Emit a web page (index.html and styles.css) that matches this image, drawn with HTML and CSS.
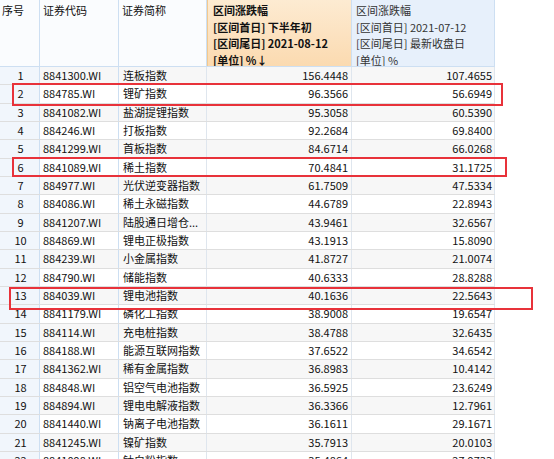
FILE: index.html
```html
<!DOCTYPE html>
<html lang="zh-CN">
<head>
<meta charset="utf-8">
<link rel="stylesheet" href="styles.css">
</head>
<body>
<div class="sheet">
  <div class="head">
    <div class="hc c1">序号</div>
    <div class="hc c2">证券代码</div>
    <div class="hc c3">证券简称</div>
    <div class="hc c4 active">区间涨跌幅<br>[区间首日] 下半年初<br>[区间尾日] 2021-08-12<br>[单位] %↓</div>
    <div class="hc c5">区间涨跌幅<br>[区间首日] 2021-07-12<br>[区间尾日] 最新收盘日<br>[单位] %</div>
  </div>
  <div class="body">
    <div class="row"><div class="c1">1</div><div class="c2">8841300.WI</div><div class="c3">连板指数</div><div class="c4">156.4448</div><div class="c5">107.4655</div></div>
    <div class="row"><div class="c1">2</div><div class="c2">884785.WI</div><div class="c3">锂矿指数</div><div class="c4">96.3566</div><div class="c5">56.6949</div></div>
    <div class="row"><div class="c1">3</div><div class="c2">8841082.WI</div><div class="c3">盐湖提锂指数</div><div class="c4">95.3058</div><div class="c5">60.5390</div></div>
    <div class="row"><div class="c1">4</div><div class="c2">884246.WI</div><div class="c3">打板指数</div><div class="c4">92.2684</div><div class="c5">69.8400</div></div>
    <div class="row"><div class="c1">5</div><div class="c2">8841299.WI</div><div class="c3">首板指数</div><div class="c4">84.6714</div><div class="c5">66.0268</div></div>
    <div class="row"><div class="c1">6</div><div class="c2">8841089.WI</div><div class="c3">稀土指数</div><div class="c4">70.4841</div><div class="c5">31.1725</div></div>
    <div class="row"><div class="c1">7</div><div class="c2">884977.WI</div><div class="c3">光伏逆变器指数</div><div class="c4">61.7509</div><div class="c5">47.5334</div></div>
    <div class="row"><div class="c1">8</div><div class="c2">884086.WI</div><div class="c3">稀土永磁指数</div><div class="c4">44.6789</div><div class="c5">22.8943</div></div>
    <div class="row"><div class="c1">9</div><div class="c2">8841207.WI</div><div class="c3">陆股通日增仓...</div><div class="c4">43.9461</div><div class="c5">32.6567</div></div>
    <div class="row"><div class="c1">10</div><div class="c2">884869.WI</div><div class="c3">锂电正极指数</div><div class="c4">43.1913</div><div class="c5">15.8090</div></div>
    <div class="row"><div class="c1">11</div><div class="c2">884239.WI</div><div class="c3">小金属指数</div><div class="c4">41.8727</div><div class="c5">21.0074</div></div>
    <div class="row"><div class="c1">12</div><div class="c2">884790.WI</div><div class="c3">储能指数</div><div class="c4">40.6333</div><div class="c5">28.8288</div></div>
    <div class="row"><div class="c1">13</div><div class="c2">884039.WI</div><div class="c3">锂电池指数</div><div class="c4">40.1636</div><div class="c5">22.5643</div></div>
    <div class="row"><div class="c1">14</div><div class="c2">8841179.WI</div><div class="c3">磷化工指数</div><div class="c4">38.9008</div><div class="c5">19.6547</div></div>
    <div class="row"><div class="c1">15</div><div class="c2">884114.WI</div><div class="c3">充电桩指数</div><div class="c4">38.4788</div><div class="c5">32.6435</div></div>
    <div class="row"><div class="c1">16</div><div class="c2">884188.WI</div><div class="c3">能源互联网指数</div><div class="c4">37.6522</div><div class="c5">34.6542</div></div>
    <div class="row"><div class="c1">17</div><div class="c2">8841362.WI</div><div class="c3">稀有金属指数</div><div class="c4">36.8983</div><div class="c5">10.4142</div></div>
    <div class="row"><div class="c1">18</div><div class="c2">884848.WI</div><div class="c3">铝空气电池指数</div><div class="c4">36.5925</div><div class="c5">23.6249</div></div>
    <div class="row"><div class="c1">19</div><div class="c2">884894.WI</div><div class="c3">锂电电解液指数</div><div class="c4">36.3366</div><div class="c5">12.7961</div></div>
    <div class="row"><div class="c1">20</div><div class="c2">8841440.WI</div><div class="c3">钠离子电池指数</div><div class="c4">36.1611</div><div class="c5">29.1671</div></div>
    <div class="row"><div class="c1">21</div><div class="c2">8841245.WI</div><div class="c3">镍矿指数</div><div class="c4">35.7913</div><div class="c5">20.0103</div></div>
    <div class="row"><div class="c1">22</div><div class="c2">8841098.WI</div><div class="c3">钛白粉指数</div><div class="c4">35.4864</div><div class="c5">27.9733</div></div>
  </div>
  <div class="mark m1"></div>
  <div class="mark m2"></div>
  <div class="mark m3"></div>
</div>
</body>
</html>
```

FILE: styles.css
```css
html, body {
  margin: 0;
  padding: 0;
  background: #ffffff;
  overflow: hidden;
}
body {
  width: 554px;
  height: 459px;
  font-family: "Noto Sans CJK SC", "Noto Sans", sans-serif;
  font-size: 11px;
  color: #111111;
}
.sheet {
  position: relative;
  width: 495px;
}
.head {
  display: grid;
  grid-template-columns: 40px 79px 88px 145px 143px;
  height: 67px;
  box-sizing: border-box;
  border-bottom: 1px solid #cddff2;
  background: #fafcfe;
}
.hc {
  box-sizing: border-box;
  border-right: 1px solid #cddff2;
  padding: 2px 3px 0 3px;
  line-height: 16.5px;
  white-space: nowrap;
  overflow: hidden;
}
.head .c1 { padding-left: 2px; }
.head .c4 {
  background: linear-gradient(#fdebd2, #fbdab0);
  border-left: 1px solid #f3c98e;
  font-weight: bold;
  padding-left: 5px;
}
.head .c5 {
  background: #e7f0fb;
  padding-left: 4px;
  color: #333;
}
.row {
  display: grid;
  grid-template-columns: 40px 79px 88px 145px 143px;
  height: 18.333px;
  box-sizing: border-box;
  border-bottom: 1px solid #dedede;
  line-height: 17px;
}
.row:nth-child(odd) { background: #f7f7f7; }
.row:nth-child(even) { background: #ffffff; }
.row > div {
  box-sizing: border-box;
  border-right: 1px solid #dfe6ee;
  white-space: nowrap;
  overflow: hidden;
}
.row .c1 {
  text-align: center;
  background: #f1f6fc;
  border-right-color: #cddff2;
  padding-left: 2px;
}
.row .c2 { padding-left: 3px; border-right-color: #cddff2; }
.row .c3 { padding-left: 4px; }
.row .c4 { text-align: right; padding-right: 3px; }
.row .c5 { text-align: right; padding-right: 2px; }
.mark {
  position: absolute;
  border: 2px solid #e8323a;
  box-sizing: border-box;
}
.m1 { left: 12px; top: 83px; width: 491px; height: 23px; }
.m2 { left: 12px; top: 157px; width: 495px; height: 20px; }
.m3 { left: 9px; top: 287px; width: 524px; height: 23px; }
```
